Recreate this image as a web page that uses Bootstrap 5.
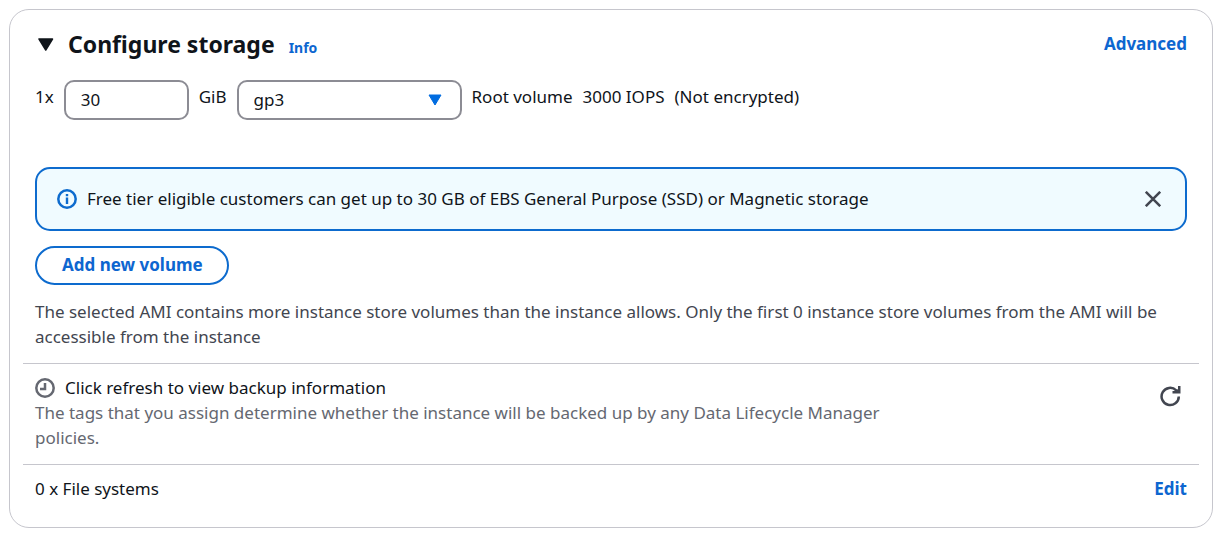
<!DOCTYPE html>
<html lang="en">
<head>
<meta charset="utf-8">
<meta name="viewport" content="width=device-width, initial-scale=1">
<title>Configure storage</title>
<link href="https://cdn.jsdelivr.net/npm/bootstrap@5.3.0/dist/css/bootstrap.min.css" rel="stylesheet">
<style>
body{font-family:"Noto Sans","Open Sans",sans-serif;font-size:17px;line-height:25px;color:#0f141a;background:#fff}
a{color:#0d66d0;text-decoration:none;font-weight:700}
.panel{margin:9px 12px 8px 9px;border:1px solid #c6c6cd;border-radius:20px;padding:19px 13px 12px}
.inset{padding-left:12px;padding-right:12px}
.panel h2{font-size:23px;line-height:30px;font-weight:700}
.info-link{font-size:14px}
.advanced-link{line-height:30px}
.gap-10{gap:10px}
.title-gap{gap:14px}
.volume-row{margin-top:20px}
.field{height:40px;border:2px solid #8c8c94;border-radius:10px;background:#fff;color:inherit;padding:0 15px 2px}
.size-field{width:125px}
.type-wrap{width:225px}
.type-wrap select{width:100%;appearance:none}
.type-wrap svg{position:absolute;right:20px;top:14px;pointer-events:none}
.notice{border:2px solid #0d6bce;border-radius:15px;background:#f0fbff;padding:17px 24px 18px 20px;margin-top:47px}
.icon-btn{border:0;background:none;padding:0;line-height:0}
.add-btn{border:2px solid #0d6bce;border-radius:20px;color:#0d66d0;font-weight:700;background:#fff;height:39px;padding:0 24px 2px 25px;margin-top:15px}
.body-note{color:#424650;margin:14px 0}
.soft-note{color:#656871;max-width:850px}
.rule-row{border-top:1px solid #c6c6cd;padding-top:11px;padding-bottom:14px}
.refresh-btn{padding:11px 6px 0}
</style>
</head>
<body>
<section class="panel">
  <div class="inset d-flex align-items-start">
    <div class="d-flex align-items-baseline title-gap">
      <button class="icon-btn align-self-center" type="button" aria-label="Collapse section" aria-expanded="true"><svg width="19" height="15" viewBox="0 0 19 15"><path d="M4 2h13.500l-6.750 11z" fill="#0f141a" stroke="#0f141a" stroke-width="1.500" stroke-linejoin="round"/></svg></button>
      <h2 class="mb-0">Configure storage</h2>
      <a class="info-link" href="#">Info</a>
    </div>
    <a class="advanced-link ms-auto" href="#">Advanced</a>
  </div>
  <div class="inset d-flex flex-wrap align-items-start gap-10 volume-row">
    <label class="pt-1" for="size">1x</label>
    <input id="size" class="field size-field" value="30">
    <label class="pt-1" for="type">GiB</label>
    <div class="type-wrap position-relative"><select id="type" class="field"><option>gp3</option></select><svg width="14" height="12" viewBox="0 0 14 12"><path d="M1 1h12l-6 10z" fill="#006ce0" stroke="#006ce0" stroke-linejoin="round"/></svg></div>
    <span class="pt-1">Root volume</span>
    <span class="pt-1">3000 IOPS</span>
    <span class="pt-1">(Not encrypted)</span>
  </div>
  <div class="inset">
    <div class="notice d-flex align-items-center gap-10" role="status">
      <svg class="flex-shrink-0" width="20" height="20" viewBox="0 0 20 20"><circle cx="10" cy="10" r="8.700" fill="none" stroke="#0d6bce" stroke-width="2.500"/><path d="M8.800 5h2.400v2.300H8.800zM8.800 8.600h2.400V15H8.800z" fill="#0d6bce"/></svg>
      <span>Free tier eligible customers can get up to 30 GB of EBS General Purpose (SSD) or Magnetic storage</span>
      <button class="icon-btn ms-auto" type="button" aria-label="Dismiss"><svg width="16" height="16" viewBox="0 0 16 16"><path d="M.8.8l14.400 14.400M15.200.8.8 15.200" stroke="#424650" stroke-width="2.500"/></svg></button>
    </div>
    <button class="add-btn" type="button">Add new volume</button>
    <p class="body-note">The selected AMI contains more instance store volumes than the instance allows. Only the first 0 instance store volumes from the AMI will be accessible from the instance</p>
  </div>
  <div class="inset rule-row d-flex align-items-start">
    <div>
      <div class="d-flex align-items-center gap-10">
        <svg class="flex-shrink-0" width="20" height="20" viewBox="0 0 20 20"><circle cx="10" cy="10" r="8.700" fill="none" stroke="#656871" stroke-width="2.500"/><path d="M10 5v6H5" fill="none" stroke="#656871" stroke-width="2.500"/></svg>
        <span>Click refresh to view backup information</span>
      </div>
      <p class="soft-note mb-0">The tags that you assign determine whether the instance will be backed up by any Data Lifecycle Manager policies.</p>
    </div>
    <button class="icon-btn refresh-btn ms-auto" type="button" aria-label="Refresh backup information"><svg width="21" height="21" viewBox="0 0 21 21"><path d="M18.800 10.500a8.600 8.600 0 1 1-2.600-6.200l1.600 1.500" fill="none" stroke="#424650" stroke-width="2.500"/><path d="M18 0h2.500v7.500h-8V5H15.500L18 3z" fill="#424650"/></svg></button>
  </div>
  <div class="inset rule-row d-flex"><span>0 x File systems</span><a class="ms-auto" href="#">Edit</a></div>
</section>
<script src="https://cdn.jsdelivr.net/npm/bootstrap@5.3.0/dist/js/bootstrap.bundle.min.js"></script>
</body>
</html>
